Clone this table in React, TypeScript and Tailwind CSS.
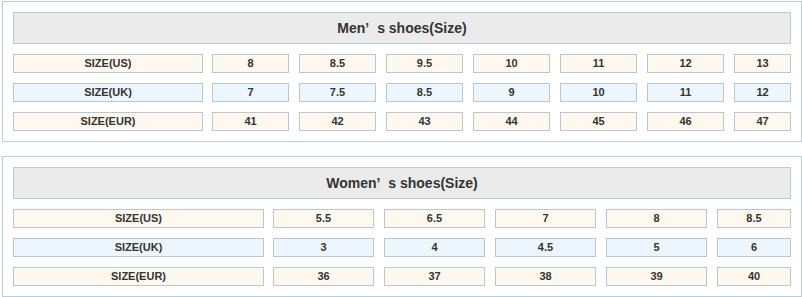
import React from "react";

const font = { fontFamily: '"Liberation Sans", Arial, sans-serif' };

type Row = { label: string; bg: "cream" | "blue"; values: string[] };

const men: Row[] = [
  { label: "SIZE(US)", bg: "cream", values: ["8", "8.5", "9.5", "10", "11", "12", "13"] },
  { label: "SIZE(UK)", bg: "blue", values: ["7", "7.5", "8.5", "9", "10", "11", "12"] },
  { label: "SIZE(EUR)", bg: "cream", values: ["41", "42", "43", "44", "45", "46", "47"] },
];

const women: Row[] = [
  { label: "SIZE(US)", bg: "cream", values: ["5.5", "6.5", "7", "8", "8.5"] },
  { label: "SIZE(UK)", bg: "blue", values: ["3", "4", "4.5", "5", "6"] },
  { label: "SIZE(EUR)", bg: "cream", values: ["36", "37", "38", "39", "40"] },
];

function Cell({ text, bg, w }: { text: string; bg: "cream" | "blue"; w: string }) {
  return (
    <div
      className={`${w} h-[19px] shrink-0 flex items-center justify-center border border-[#b7c8d1] text-[11px] font-bold text-[#333] leading-none ${
        bg === "cream" ? "bg-[#fff8ef]" : "bg-[#eef6fd]"
      }`}
    >
      {text}
    </div>
  );
}

function Box({
  who,
  rows,
  labelW,
  cellW,
  lastW,
}: {
  who: string;
  rows: Row[];
  labelW: string;
  cellW: string;
  lastW: string;
}) {
  return (
    <div className="ml-[2px] w-[800px] h-[141px] border border-[#b6d1da] bg-white p-[10px] flex flex-col gap-[10px]">
      <div className="h-[32px] border border-[#b9cbd4] bg-[#ebebeb] flex items-center justify-center text-[14px] font-bold text-[#333] whitespace-pre">
        {who}
        <span className="mr-[4px]">’</span>
        {" s shoes(Size)"}
      </div>
      {rows.map((r, i) => (
        <div key={i} className="flex">
          <Cell text={r.label} bg={r.bg} w={labelW} />
          <div className="ml-[9px] flex gap-[10px]">
            {r.values.map((v, j) => (
              <Cell key={j} text={v} bg={r.bg} w={j === r.values.length - 1 ? lastW : cellW} />
            ))}
          </div>
        </div>
      ))}
    </div>
  );
}

export default function App() {
  return (
    <div className="w-[802px] h-[297px] bg-white pt-[1px] flex flex-col gap-[14px]" style={font}>
      <Box who="Men" rows={men} labelW="w-[190px]" cellW="w-[77px]" lastW="w-[57px]" />
      <Box who="Women" rows={women} labelW="w-[251px]" cellW="w-[101px]" lastW="w-[74px]" />
    </div>
  );
}
